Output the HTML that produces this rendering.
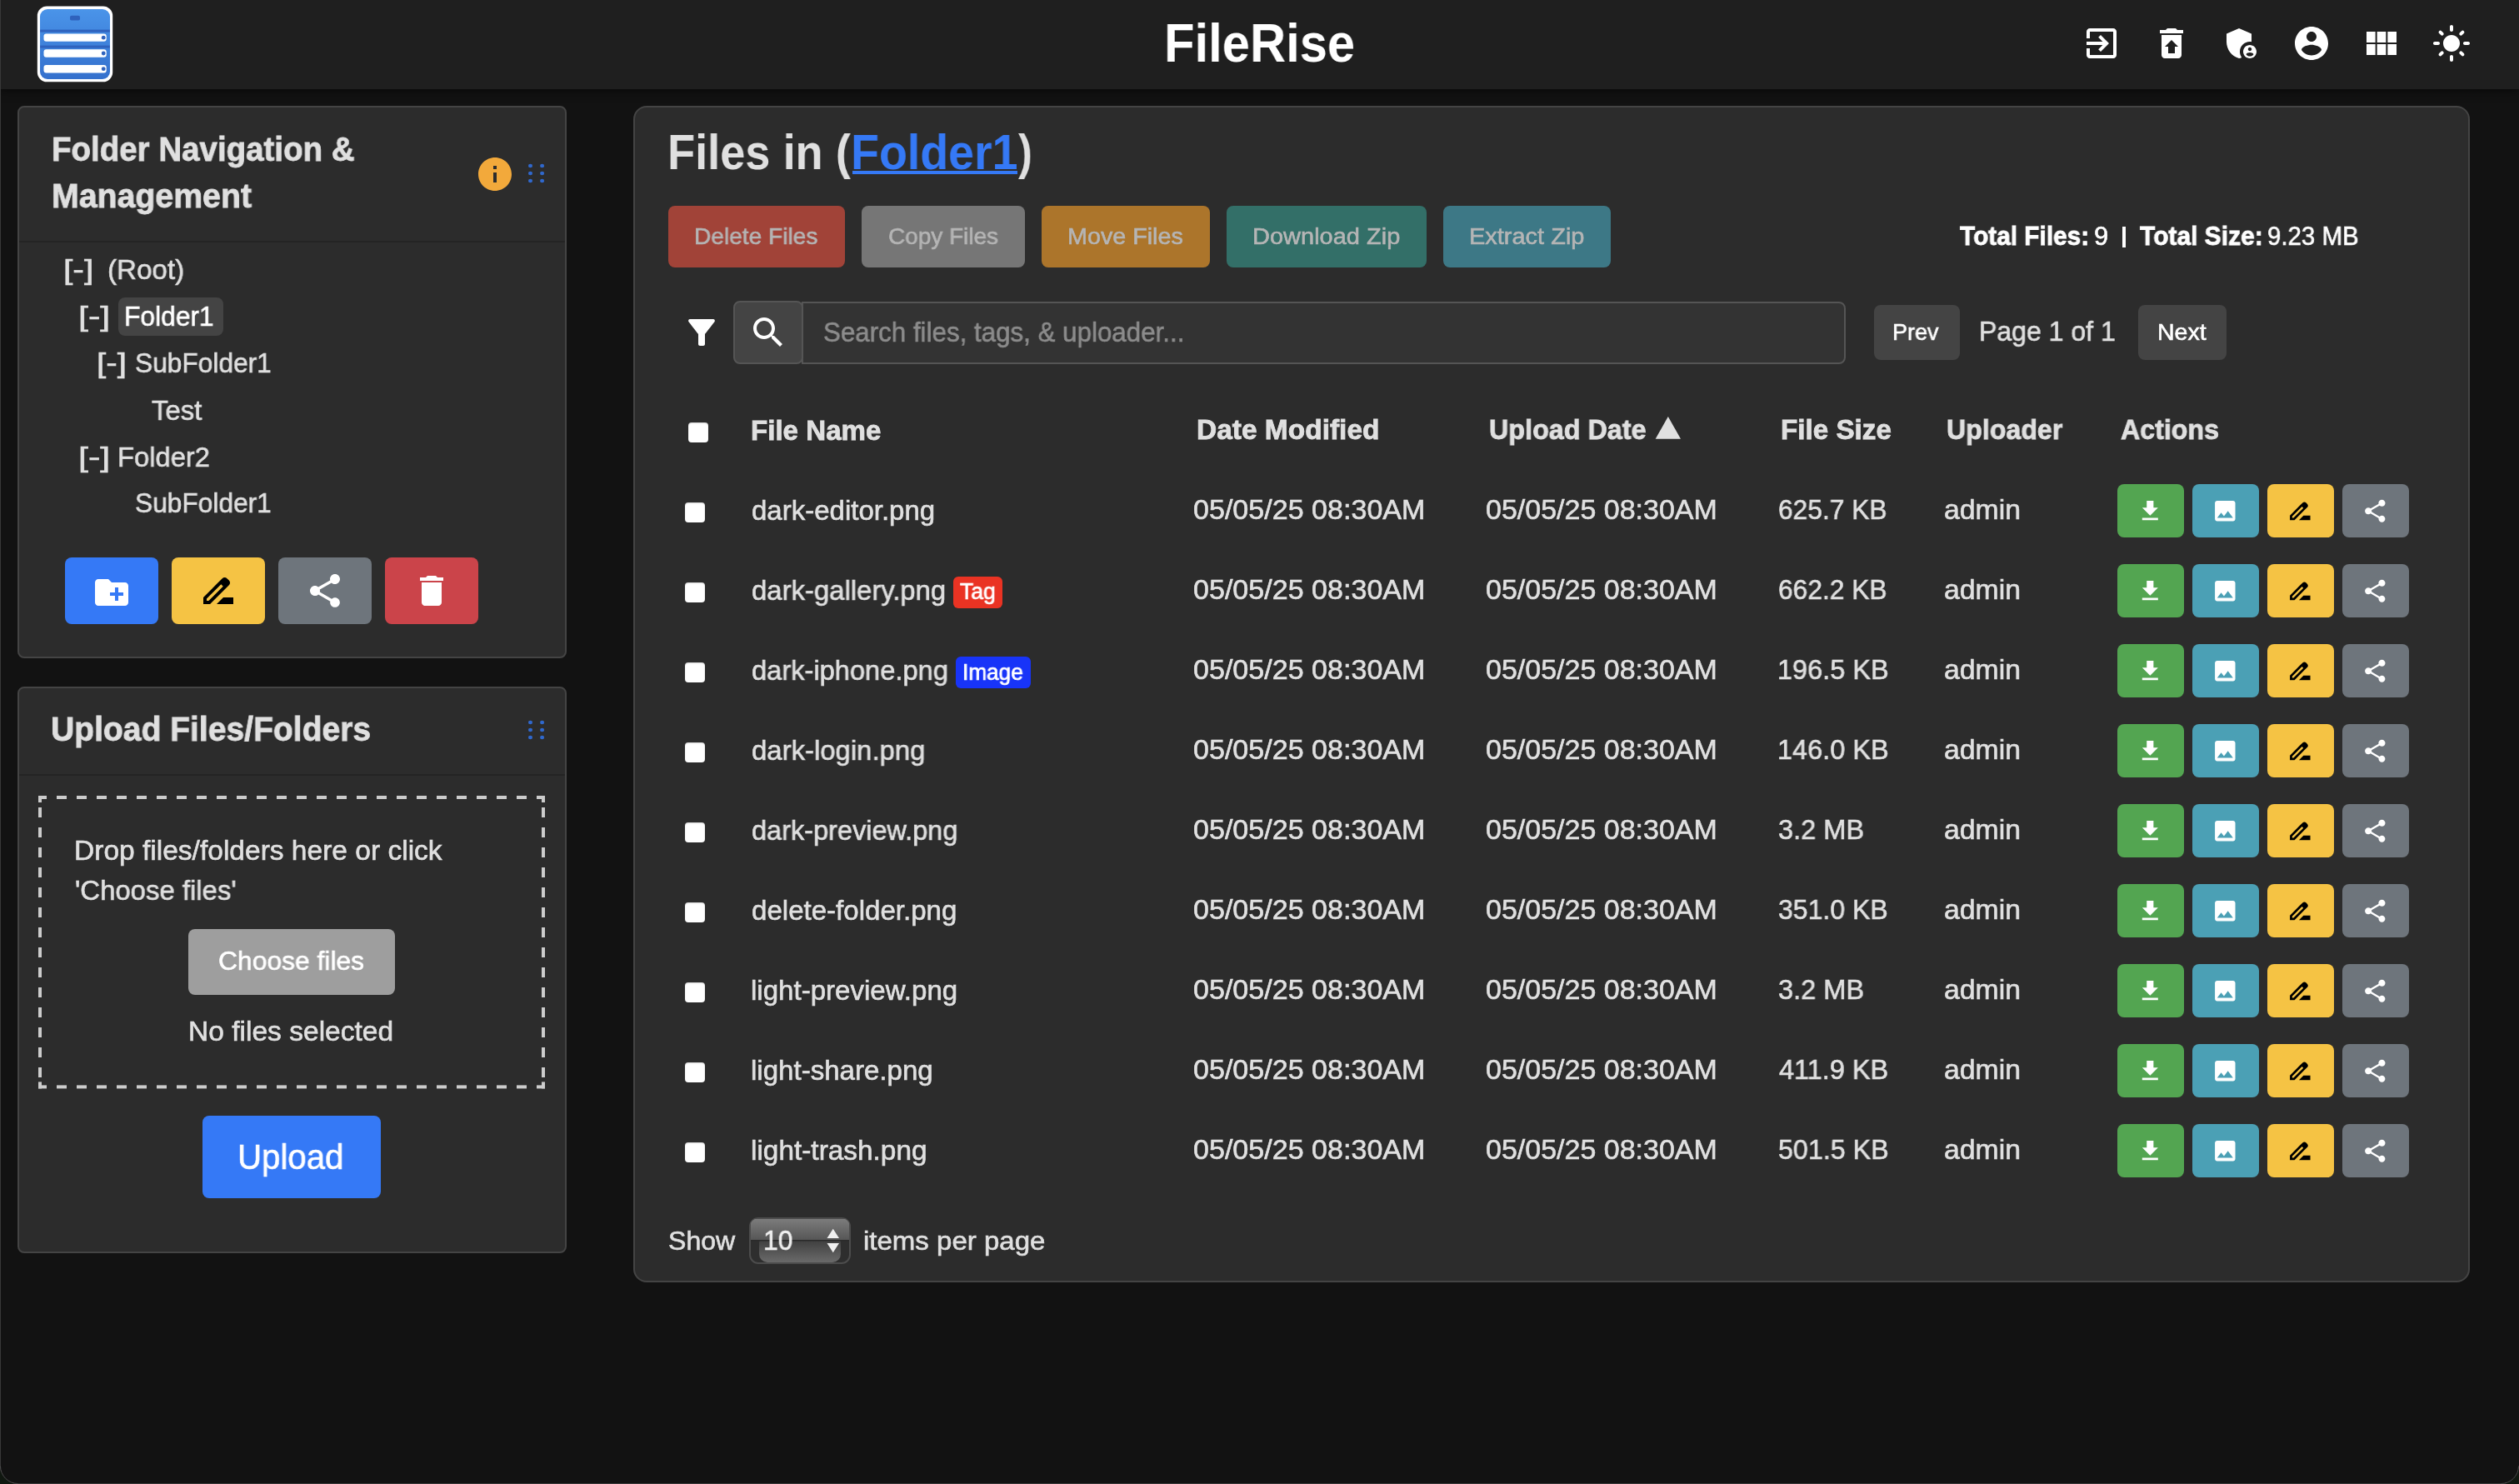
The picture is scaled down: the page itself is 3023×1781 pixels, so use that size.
<!DOCTYPE html>
<html><head><meta charset="utf-8"><title>FileRise</title>
<style>
html,body{margin:0;padding:0;}
body{width:3023px;height:1781px;background:#121212;position:relative;overflow:hidden;font-family:"Liberation Sans",sans-serif;}
.b{position:absolute;}
.t{position:absolute;white-space:pre;transform-origin:0 0;will-change:transform;}
</style></head><body>
<div class="b" style="left:0px;top:0px;width:3023px;height:107px;background:#1f1f1f;box-shadow:0 2px 10px rgba(0,0,0,0.55);z-index:1;"></div>
<svg class="b" style="left:44px;top:7px;z-index:2" width="92" height="92" viewBox="0 0 92 92">
<defs><linearGradient id="lg" x1="0" y1="0" x2="0" y2="1"><stop offset="0" stop-color="#4a94e9"/><stop offset="1" stop-color="#3470cd"/></linearGradient></defs>
<rect x="0.8" y="0.5" width="90.4" height="90.8" rx="11.5" fill="#fff"/>
<rect x="4" y="4" width="84" height="84" rx="9" fill="url(#lg)"/>
<rect x="40" y="11.8" width="12" height="5.7" rx="1.8" fill="#2f62bd"/>
<rect x="4" y="28.6" width="84" height="3" fill="#2f62bd"/>
<rect x="4" y="47.6" width="84" height="3" fill="#2f62bd"/>
<rect x="8.5" y="33.4" width="75.2" height="9.4" rx="3" fill="#fff"/>
<rect x="8.5" y="52.3" width="75.2" height="9.4" rx="3" fill="#fff"/>
<rect x="8.5" y="71" width="75.2" height="9.4" rx="3" fill="#fff"/>
<circle cx="80.2" cy="38.2" r="2.4" fill="#2f62bd"/>
<circle cx="80.2" cy="57" r="2.4" fill="#2f62bd"/>
<circle cx="80.2" cy="75.7" r="2.4" fill="#2f62bd"/>
</svg>
<div class="t" id="hdr_title" style="left:1396.85px;top:19.40px;font-size:65px;line-height:65px;color:#ffffff;font-weight:bold;transform:scaleX(0.9194);z-index:2;">FileRise</div>
<svg class="b" style="left:2498px;top:27.5px;z-index:2;" width="48" height="48" viewBox="0 0 24 24"><path fill="#ffffff" d="M10.09 15.59L11.5 17l5-5-5-5-1.41 1.41L12.67 11H3v2h9.67l-2.58 2.59zM19 3H5c-1.11 0-2 .9-2 2v4h2V5h14v14H5v-4H3v4c0 1.1.89 2 2 2h14c1.1 0 2-.9 2-2V5c0-1.1-.9-2-2-2z"/></svg>
<svg class="b" style="left:2582px;top:27.5px;z-index:2;" width="48" height="48" viewBox="0 0 24 24"><path fill="#ffffff" d="M19 4h-3.5l-1-1h-5l-1 1H5v2h14zM6 7v12c0 1.1.9 2 2 2h8c1.1 0 2-.9 2-2V7H6zm8 7v4h-4v-4H8l4-4 4 4h-2z"/></svg>
<svg class="b" style="left:2666px;top:27.5px;z-index:2;" width="48" height="48" viewBox="0 0 24 24"><path fill="#ffffff" d="M17 11c.34 0 .67.04 1 .09V6.27L10.5 3 3 6.27v4.91c0 4.54 3.2 8.79 7.5 9.82.55-.13 1.08-.32 1.6-.55-.69-.98-1.1-2.17-1.1-3.45 0-3.31 2.69-6 6-6zM17 13c-2.21 0-4 1.79-4 4s1.79 4 4 4 4-1.79 4-4-1.79-4-4-4zm0 1.38c.62 0 1.12.51 1.12 1.12s-.51 1.12-1.12 1.12-1.12-.51-1.12-1.12.5-1.12 1.12-1.12zm0 5.37c-.93 0-1.74-.46-2.24-1.17.05-.72 1.51-1.08 2.24-1.08s2.19.36 2.24 1.08c-.5.71-1.31 1.17-2.24 1.17z"/></svg>
<svg class="b" style="left:2750px;top:27.5px;z-index:2;" width="48" height="48" viewBox="0 0 24 24"><path fill="#ffffff" d="M12 2C6.48 2 2 6.48 2 12s4.48 10 10 10 10-4.48 10-10S17.52 2 12 2zm0 3c1.66 0 3 1.34 3 3s-1.34 3-3 3-3-1.34-3-3 1.34-3 3-3zm0 14.2c-2.5 0-4.71-1.28-6-3.22.03-1.99 4-3.08 6-3.08 1.99 0 5.97 1.09 6 3.08-1.29 1.94-3.5 3.22-6 3.22z"/></svg>
<svg class="b" style="left:2834px;top:27.5px;z-index:2;" width="48" height="48" viewBox="0 0 24 24"><path fill="#ffffff" d="M14.67 5v6.5H9.33V5h5.34zm1 6.5H21V5h-5.33v6.5zm-1 7.5v-6.5H9.33V19h5.34zm1-6.5V19H21v-6.5h-5.33zm-7.34 0H3V19h5.33v-6.5zm0-1V5H3v6.5h5.33z"/></svg>
<svg class="b" style="left:2918px;top:27.5px;z-index:2;" width="48" height="48" viewBox="0 0 24 24"><path fill="#ffffff" d="M12 7c-2.76 0-5 2.24-5 5s2.24 5 5 5 5-2.24 5-5-2.24-5-5-5zM2 13h2c.55 0 1-.45 1-1s-.45-1-1-1H2c-.55 0-1 .45-1 1s.45 1 1 1zm18 0h2c.55 0 1-.45 1-1s-.45-1-1-1h-2c-.55 0-1 .45-1 1s.45 1 1 1zM11 2v2c0 .55.45 1 1 1s1-.45 1-1V2c0-.55-.45-1-1-1s-1 .45-1 1zm0 18v2c0 .55.45 1 1 1s1-.45 1-1v-2c0-.55-.45-1-1-1s-1 .45-1 1zM5.99 4.58c-.39-.39-1.03-.39-1.41 0-.39.39-.39 1.03 0 1.41l1.06 1.06c.39.39 1.03.39 1.41 0s.39-1.03 0-1.41L5.99 4.58zm12.37 12.37c-.39-.39-1.03-.39-1.41 0-.39.39-.39 1.03 0 1.41l1.06 1.06c.39.39 1.03.39 1.41 0 .39-.39.39-1.03 0-1.41l-1.06-1.06zm1.06-10.96c.39-.39.39-1.03 0-1.41-.39-.39-1.03-.39-1.41 0l-1.06 1.06c-.39.39-.39 1.03 0 1.41s1.03.39 1.41 0l1.06-1.06zM7.05 18.36c.39-.39.39-1.03 0-1.41-.39-.39-1.03-.39-1.41 0l-1.06 1.06c-.39.39-.39 1.03 0 1.41s1.03.39 1.41 0l1.06-1.06z"/></svg>
<div class="b" style="left:21px;top:127px;width:659px;height:663px;background:#2c2c2c;border:2px solid #444;box-sizing:border-box;border-radius:8px;"></div>
<div class="b" style="left:23px;top:289px;width:655px;height:2px;background:#242424;"></div>
<div class="t" id="fn_t1" style="left:61.65px;top:159.16px;font-size:41px;line-height:41px;color:#e0e0e0;font-weight:bold;transform:scaleX(0.9388);-webkit-text-stroke:0.8px #e0e0e0;">Folder Navigation &amp;</div>
<div class="t" id="fn_t2" style="left:61.59px;top:214.56px;font-size:41px;line-height:41px;color:#e0e0e0;font-weight:bold;transform:scaleX(0.9577);-webkit-text-stroke:0.8px #e0e0e0;">Management</div>
<svg class="b" style="left:569.6px;top:185px;" width="48" height="48" viewBox="0 0 24 24"><path fill="#f2a93b" d="M12 2C6.48 2 2 6.48 2 12s4.48 10 10 10 10-4.48 10-10S17.52 2 12 2zm1 15h-2v-6h2v6zm0-8h-2V7h2v2z"/></svg>
<svg class="b" style="left:628px;top:191.1px" width="30" height="30" viewBox="0 0 30 30"><ellipse cx="8.5" cy="8" rx="2.55" ry="2.25" fill="#3068cc"/><ellipse cx="8.5" cy="16.9" rx="2.55" ry="2.25" fill="#3068cc"/><ellipse cx="8.5" cy="25.9" rx="2.55" ry="2.25" fill="#3068cc"/><ellipse cx="22.6" cy="8" rx="2.55" ry="2.25" fill="#3068cc"/><ellipse cx="22.6" cy="16.9" rx="2.55" ry="2.25" fill="#3068cc"/><ellipse cx="22.6" cy="25.9" rx="2.55" ry="2.25" fill="#3068cc"/></svg>
<div class="t" id="tr_b1" style="left:76.10px;top:306.44px;font-size:34px;line-height:34px;color:#e0e0e0;font-weight:normal;transform:scaleX(1.2026);-webkit-text-stroke:0.6px #e0e0e0;">[-]</div>
<div class="t" id="tr_root" style="left:128.53px;top:306.44px;font-size:34px;line-height:34px;color:#e0e0e0;font-weight:normal;transform:scaleX(0.9746);-webkit-text-stroke:0.6px #e0e0e0;">(Root)</div>
<div class="t" id="tr_b2" style="left:94.45px;top:362.44px;font-size:34px;line-height:34px;color:#e0e0e0;font-weight:normal;transform:scaleX(1.2616);-webkit-text-stroke:0.6px #e0e0e0;">[-]</div>
<div class="b" style="left:142px;top:357.2px;width:125.5px;height:45.5px;background:#444;border-radius:8px;"></div>
<div class="t" id="tr_f1" style="left:149.13px;top:362.44px;font-size:34px;line-height:34px;color:#ffffff;font-weight:normal;transform:scaleX(0.9339);-webkit-text-stroke:0.6px #ffffff;">Folder1</div>
<div class="t" id="tr_b3" style="left:115.68px;top:418.44px;font-size:34px;line-height:34px;color:#e0e0e0;font-weight:normal;transform:scaleX(1.1909);-webkit-text-stroke:0.6px #e0e0e0;">[-]</div>
<div class="t" id="tr_sf1" style="left:161.59px;top:418.44px;font-size:34px;line-height:34px;color:#e0e0e0;font-weight:normal;transform:scaleX(0.9319);-webkit-text-stroke:0.6px #e0e0e0;">SubFolder1</div>
<div class="t" id="tr_test" style="left:182.45px;top:474.64px;font-size:34px;line-height:34px;color:#e0e0e0;font-weight:normal;transform:scaleX(0.9656);-webkit-text-stroke:0.6px #e0e0e0;">Test</div>
<div class="t" id="tr_b4" style="left:94.45px;top:531.14px;font-size:34px;line-height:34px;color:#e0e0e0;font-weight:normal;transform:scaleX(1.2616);-webkit-text-stroke:0.6px #e0e0e0;">[-]</div>
<div class="t" id="tr_f2" style="left:140.99px;top:531.14px;font-size:34px;line-height:34px;color:#e0e0e0;font-weight:normal;transform:scaleX(0.9626);-webkit-text-stroke:0.6px #e0e0e0;">Folder2</div>
<div class="t" id="tr_sf2" style="left:161.59px;top:586.44px;font-size:34px;line-height:34px;color:#e0e0e0;font-weight:normal;transform:scaleX(0.9319);-webkit-text-stroke:0.6px #e0e0e0;">SubFolder1</div>
<div class="b" style="left:78px;top:669px;width:112px;height:80px;background:#3579f6;border-radius:8px;"></div>
<svg class="b" style="left:110px;top:686.5px;" width="48" height="48" viewBox="0 0 24 24"><path fill="#fff" d="M20 6h-8l-2-2H4c-1.11 0-1.99.89-1.99 2L2 18c0 1.11.89 2 2 2h16c1.11 0 2-.89 2-2V8c0-1.11-.89-2-2-2z"/></svg>
<svg class="b" style="left:110px;top:686.5px;" width="48" height="48" viewBox="0 0 24 24"><path fill="#3579f6" d="M19 14h-3v3h-2v-3h-3v-2h3V9h2v3h3v2z"/></svg>
<div class="b" style="left:206px;top:669px;width:112px;height:80px;background:#f5c344;border-radius:8px;"></div>
<svg class="b" style="left:238px;top:684.5px;" width="48" height="48" viewBox="0 0 24 24"><path fill="#000" d="M18.41 5.8L17.2 4.59c-.78-.78-2.05-.78-2.83 0l-2.68 2.68L3 15.96V20h4.04l8.74-8.74 2.63-2.63c.79-.78.79-2.05 0-2.83zM6.21 18H5v-1.21l8.66-8.66 1.21 1.21L6.21 18zM11 20l4-4h6v4H11z"/></svg>
<div class="b" style="left:334px;top:669px;width:112px;height:80px;background:#6e757c;border-radius:8px;"></div>
<svg class="b" style="left:366px;top:684.5px;" width="48" height="48" viewBox="0 0 24 24"><path fill="#fff" d="M18 16.08c-.76 0-1.44.3-1.96.77L8.91 12.7c.05-.23.09-.46.09-.7s-.04-.47-.09-.7l7.05-4.11c.54.5 1.25.81 2.04.81 1.66 0 3-1.34 3-3s-1.34-3-3-3-3 1.34-3 3c0 .24.04.47.09.7L8.04 9.81C7.5 9.31 6.79 9 6 9c-1.66 0-3 1.34-3 3s1.34 3 3 3c.79 0 1.5-.31 2.04-.81l7.12 4.16c-.05.21-.08.43-.08.65 0 1.61 1.31 2.92 2.92 2.92 1.61 0 2.92-1.31 2.92-2.92s-1.31-2.92-2.92-2.92z"/></svg>
<div class="b" style="left:462px;top:669px;width:112px;height:80px;background:#cb444a;border-radius:8px;"></div>
<svg class="b" style="left:494px;top:684.5px;" width="48" height="48" viewBox="0 0 24 24"><path fill="#fff" d="M6 19c0 1.1.9 2 2 2h8c1.1 0 2-.9 2-2V7H6v12zM19 4h-3.5l-1-1h-5l-1 1H5v2h14V4z"/></svg>
<div class="b" style="left:21px;top:824px;width:659px;height:680px;background:#2c2c2c;border:2px solid #444;box-sizing:border-box;border-radius:8px;"></div>
<div class="b" style="left:23px;top:928.5px;width:655px;height:2px;background:#242424;"></div>
<div class="t" id="up_t" style="left:61.18px;top:854.96px;font-size:41px;line-height:41px;color:#e0e0e0;font-weight:bold;transform:scaleX(0.9523);-webkit-text-stroke:0.8px #e0e0e0;">Upload Files/Folders</div>
<svg class="b" style="left:628px;top:859.0px" width="30" height="30" viewBox="0 0 30 30"><ellipse cx="8.5" cy="8" rx="2.55" ry="2.25" fill="#3068cc"/><ellipse cx="8.5" cy="16.9" rx="2.55" ry="2.25" fill="#3068cc"/><ellipse cx="8.5" cy="25.9" rx="2.55" ry="2.25" fill="#3068cc"/><ellipse cx="22.6" cy="8" rx="2.55" ry="2.25" fill="#3068cc"/><ellipse cx="22.6" cy="16.9" rx="2.55" ry="2.25" fill="#3068cc"/><ellipse cx="22.6" cy="25.9" rx="2.55" ry="2.25" fill="#3068cc"/></svg>
<svg class="b" style="left:0;top:0" width="700" height="1400"><rect x="46" y="955" width="10" height="4" fill="#cccccc"/><rect x="46" y="955" width="4" height="8" fill="#cccccc"/><rect x="644" y="955" width="10" height="4" fill="#cccccc"/><rect x="650" y="955" width="4" height="8" fill="#cccccc"/><rect x="46" y="1302.4" width="10" height="4" fill="#cccccc"/><rect x="46" y="1298.4" width="4" height="8" fill="#cccccc"/><rect x="644" y="1302.4" width="10" height="4" fill="#cccccc"/><rect x="650" y="1298.4" width="4" height="8" fill="#cccccc"/><rect x="68" y="955" width="12" height="4" fill="#cccccc"/><rect x="68" y="1302.4" width="12" height="4" fill="#cccccc"/><rect x="92" y="955" width="12" height="4" fill="#cccccc"/><rect x="92" y="1302.4" width="12" height="4" fill="#cccccc"/><rect x="116" y="955" width="12" height="4" fill="#cccccc"/><rect x="116" y="1302.4" width="12" height="4" fill="#cccccc"/><rect x="140" y="955" width="12" height="4" fill="#cccccc"/><rect x="140" y="1302.4" width="12" height="4" fill="#cccccc"/><rect x="164" y="955" width="12" height="4" fill="#cccccc"/><rect x="164" y="1302.4" width="12" height="4" fill="#cccccc"/><rect x="188" y="955" width="12" height="4" fill="#cccccc"/><rect x="188" y="1302.4" width="12" height="4" fill="#cccccc"/><rect x="212" y="955" width="12" height="4" fill="#cccccc"/><rect x="212" y="1302.4" width="12" height="4" fill="#cccccc"/><rect x="236" y="955" width="12" height="4" fill="#cccccc"/><rect x="236" y="1302.4" width="12" height="4" fill="#cccccc"/><rect x="260" y="955" width="12" height="4" fill="#cccccc"/><rect x="260" y="1302.4" width="12" height="4" fill="#cccccc"/><rect x="284" y="955" width="12" height="4" fill="#cccccc"/><rect x="284" y="1302.4" width="12" height="4" fill="#cccccc"/><rect x="308" y="955" width="12" height="4" fill="#cccccc"/><rect x="308" y="1302.4" width="12" height="4" fill="#cccccc"/><rect x="332" y="955" width="12" height="4" fill="#cccccc"/><rect x="332" y="1302.4" width="12" height="4" fill="#cccccc"/><rect x="356" y="955" width="12" height="4" fill="#cccccc"/><rect x="356" y="1302.4" width="12" height="4" fill="#cccccc"/><rect x="380" y="955" width="12" height="4" fill="#cccccc"/><rect x="380" y="1302.4" width="12" height="4" fill="#cccccc"/><rect x="404" y="955" width="12" height="4" fill="#cccccc"/><rect x="404" y="1302.4" width="12" height="4" fill="#cccccc"/><rect x="428" y="955" width="12" height="4" fill="#cccccc"/><rect x="428" y="1302.4" width="12" height="4" fill="#cccccc"/><rect x="452" y="955" width="12" height="4" fill="#cccccc"/><rect x="452" y="1302.4" width="12" height="4" fill="#cccccc"/><rect x="476" y="955" width="12" height="4" fill="#cccccc"/><rect x="476" y="1302.4" width="12" height="4" fill="#cccccc"/><rect x="500" y="955" width="12" height="4" fill="#cccccc"/><rect x="500" y="1302.4" width="12" height="4" fill="#cccccc"/><rect x="524" y="955" width="12" height="4" fill="#cccccc"/><rect x="524" y="1302.4" width="12" height="4" fill="#cccccc"/><rect x="548" y="955" width="12" height="4" fill="#cccccc"/><rect x="548" y="1302.4" width="12" height="4" fill="#cccccc"/><rect x="572" y="955" width="12" height="4" fill="#cccccc"/><rect x="572" y="1302.4" width="12" height="4" fill="#cccccc"/><rect x="596" y="955" width="12" height="4" fill="#cccccc"/><rect x="596" y="1302.4" width="12" height="4" fill="#cccccc"/><rect x="620" y="955" width="12" height="4" fill="#cccccc"/><rect x="620" y="1302.4" width="12" height="4" fill="#cccccc"/><rect x="46" y="969" width="4" height="12" fill="#cccccc"/><rect x="650" y="969" width="4" height="12" fill="#cccccc"/><rect x="46" y="993" width="4" height="12" fill="#cccccc"/><rect x="650" y="993" width="4" height="12" fill="#cccccc"/><rect x="46" y="1017" width="4" height="12" fill="#cccccc"/><rect x="650" y="1017" width="4" height="12" fill="#cccccc"/><rect x="46" y="1041" width="4" height="12" fill="#cccccc"/><rect x="650" y="1041" width="4" height="12" fill="#cccccc"/><rect x="46" y="1065" width="4" height="12" fill="#cccccc"/><rect x="650" y="1065" width="4" height="12" fill="#cccccc"/><rect x="46" y="1089" width="4" height="12" fill="#cccccc"/><rect x="650" y="1089" width="4" height="12" fill="#cccccc"/><rect x="46" y="1113" width="4" height="12" fill="#cccccc"/><rect x="650" y="1113" width="4" height="12" fill="#cccccc"/><rect x="46" y="1137" width="4" height="12" fill="#cccccc"/><rect x="650" y="1137" width="4" height="12" fill="#cccccc"/><rect x="46" y="1161" width="4" height="12" fill="#cccccc"/><rect x="650" y="1161" width="4" height="12" fill="#cccccc"/><rect x="46" y="1185" width="4" height="12" fill="#cccccc"/><rect x="650" y="1185" width="4" height="12" fill="#cccccc"/><rect x="46" y="1209" width="4" height="12" fill="#cccccc"/><rect x="650" y="1209" width="4" height="12" fill="#cccccc"/><rect x="46" y="1233" width="4" height="12" fill="#cccccc"/><rect x="650" y="1233" width="4" height="12" fill="#cccccc"/><rect x="46" y="1257" width="4" height="12" fill="#cccccc"/><rect x="650" y="1257" width="4" height="12" fill="#cccccc"/><rect x="46" y="1281" width="4" height="12" fill="#cccccc"/><rect x="650" y="1281" width="4" height="12" fill="#cccccc"/></svg>
<div class="t" id="up_d1" style="left:88.57px;top:1004.28px;font-size:33px;line-height:33px;color:#e0e0e0;font-weight:normal;transform:scaleX(1.0160);-webkit-text-stroke:0.6px #e0e0e0;">Drop files/folders here or click</div>
<div class="t" id="up_d2" style="left:89.61px;top:1052.28px;font-size:33px;line-height:33px;color:#e0e0e0;font-weight:normal;transform:scaleX(0.9969);-webkit-text-stroke:0.6px #e0e0e0;">&#x27;Choose files&#x27;</div>
<div class="b" style="left:226px;top:1115px;width:248px;height:79px;background:#9e9e9e;border-radius:8px;"></div>
<div class="t" id="up_choose" style="left:262.01px;top:1137.12px;font-size:32px;line-height:32px;color:#ffffff;font-weight:normal;transform:scaleX(0.9943);-webkit-text-stroke:0.6px #ffffff;">Choose files</div>
<div class="t" id="up_none" style="left:225.97px;top:1220.88px;font-size:33px;line-height:33px;color:#e0e0e0;font-weight:normal;transform:scaleX(1.0168);-webkit-text-stroke:0.6px #e0e0e0;">No files selected</div>
<div class="b" style="left:243px;top:1339px;width:214px;height:99px;background:#3579f6;border-radius:8px;"></div>
<div class="t" id="up_btn" style="left:285.14px;top:1367.72px;font-size:42px;line-height:42px;color:#ffffff;font-weight:normal;transform:scaleX(0.9571);-webkit-text-stroke:0.6px #ffffff;">Upload</div>
<div class="b" style="left:760px;top:127px;width:2204px;height:1412px;background:#2c2c2c;border:2px solid #444;box-sizing:border-box;border-radius:16px;"></div>
<div class="t" id="m_title1" style="left:801.48px;top:152.60px;font-size:60px;line-height:60px;color:#e0e0e0;font-weight:bold;transform:scaleX(0.9030);">Files in (</div>
<div class="t" id="m_title2" style="left:1021.15px;top:152.60px;font-size:60px;line-height:60px;color:#3579f6;font-weight:bold;transform:scaleX(0.9254);">Folder1</div>
<div class="b" style="left:1022.6px;top:205.3px;width:198.2px;height:3.9px;background:#3579f6;"></div>
<div class="t" id="m_title3" style="left:1221.53px;top:152.60px;font-size:60px;line-height:60px;color:#e0e0e0;font-weight:bold;transform:scaleX(0.8447);">)</div>
<div class="b" style="left:802px;top:247px;width:212px;height:74px;background:#a14338;border-radius:8px;"></div>
<div class="t" id="m_btn0" style="left:833.03px;top:269.06px;font-size:28.5px;line-height:28.5px;color:#b5b5b5;font-weight:normal;transform:scaleX(0.9865);-webkit-text-stroke:0.6px #b5b5b5;">Delete Files</div>
<div class="b" style="left:1034px;top:247px;width:196px;height:74px;background:#767676;border-radius:8px;"></div>
<div class="t" id="m_btn1" style="left:1065.62px;top:269.06px;font-size:28.5px;line-height:28.5px;color:#b5b5b5;font-weight:normal;transform:scaleX(0.9813);-webkit-text-stroke:0.6px #b5b5b5;">Copy Files</div>
<div class="b" style="left:1250px;top:247px;width:202px;height:74px;background:#ac752b;border-radius:8px;"></div>
<div class="t" id="m_btn2" style="left:1280.98px;top:269.06px;font-size:28.5px;line-height:28.5px;color:#b5b5b5;font-weight:normal;transform:scaleX(1.0075);-webkit-text-stroke:0.6px #b5b5b5;">Move Files</div>
<div class="b" style="left:1472px;top:247px;width:240px;height:74px;background:#336f68;border-radius:8px;"></div>
<div class="t" id="m_btn3" style="left:1502.98px;top:269.06px;font-size:28.5px;line-height:28.5px;color:#b5b5b5;font-weight:normal;transform:scaleX(1.0177);-webkit-text-stroke:0.6px #b5b5b5;">Download Zip</div>
<div class="b" style="left:1732px;top:247px;width:201px;height:74px;background:#3d7886;border-radius:8px;"></div>
<div class="t" id="m_btn4" style="left:1762.80px;top:269.06px;font-size:28.5px;line-height:28.5px;color:#b5b5b5;font-weight:normal;transform:scaleX(1.0166);-webkit-text-stroke:0.6px #b5b5b5;">Extract Zip</div>
<div class="t" id="m_tot1" style="left:2352.17px;top:267.66px;font-size:31px;line-height:31px;color:#ffffff;font-weight:bold;transform:scaleX(0.9615);-webkit-text-stroke:0.8px #ffffff;">Total Files:</div>
<div class="t" id="m_tot2" style="left:2513.46px;top:267.66px;font-size:31px;line-height:31px;color:#ffffff;font-weight:normal;transform:scaleX(1.0005);-webkit-text-stroke:0.6px #ffffff;">9</div>
<div class="b" style="left:2547.2px;top:272px;width:3.6px;height:25px;background:#ffffff;"></div>
<div class="t" id="m_tot4" style="left:2568.00px;top:267.66px;font-size:31px;line-height:31px;color:#ffffff;font-weight:bold;transform:scaleX(0.9665);-webkit-text-stroke:0.8px #ffffff;">Total Size:</div>
<div class="t" id="m_tot5" style="left:2721.48px;top:267.66px;font-size:31px;line-height:31px;color:#ffffff;font-weight:normal;transform:scaleX(0.9498);-webkit-text-stroke:0.6px #ffffff;">9.23 MB</div>
<svg class="b" style="left:818px;top:374.6px;" width="48" height="48" viewBox="0 0 24 24"><path fill="#ffffff" d="M4.25 5.61C6.27 8.2 10 13 10 13v6c0 .55.45 1 1 1h2c.55 0 1-.45 1-1v-6s3.72-4.8 5.74-7.39c.51-.66.04-1.61-.79-1.61H5.04c-.83 0-1.3.95-.79 1.61z"/></svg>
<div class="b" style="left:962px;top:361.5px;width:1253px;height:75px;background:#333;border:2px solid #555;box-sizing:border-box;border-radius:0 8px 8px 0;"></div>
<div class="b" style="left:880px;top:361px;width:84px;height:76px;background:#444;border:2px solid #555;box-sizing:border-box;border-radius:8px;"></div>
<svg class="b" style="left:898px;top:375px;" width="48" height="48" viewBox="0 0 24 24"><path fill="#ffffff" d="M15.5 14h-.79l-.28-.27C15.41 12.59 16 11.11 16 9.5 16 5.91 13.09 3 9.5 3S3 5.91 3 9.5 5.91 16 9.5 16c1.61 0 3.09-.59 4.23-1.57l.27.28v.79l5 4.99L20.49 19l-4.99-5zm-6 0C7.01 14 5 11.99 5 9.5S7.01 5 9.5 5 14 7.01 14 9.5 11.99 14 9.5 14z"/></svg>
<div class="t" id="m_ph" style="left:988.08px;top:381.44px;font-size:34px;line-height:34px;color:#8c8c8c;font-weight:normal;transform:scaleX(0.9208);-webkit-text-stroke:0.6px #8c8c8c;">Search files, tags, &amp; uploader...</div>
<div class="b" style="left:2249px;top:366px;width:103px;height:66px;background:#444;border-radius:8px;"></div>
<div class="t" id="m_prev" style="left:2271.11px;top:384.06px;font-size:28.5px;line-height:28.5px;color:#ffffff;font-weight:normal;transform:scaleX(0.9477);-webkit-text-stroke:0.6px #ffffff;">Prev</div>
<div class="t" id="m_page" style="left:2375.04px;top:381.28px;font-size:33px;line-height:33px;color:#e0e0e0;font-weight:normal;transform:scaleX(0.9700);-webkit-text-stroke:0.6px #e0e0e0;">Page 1 of 1</div>
<div class="b" style="left:2566px;top:366px;width:106px;height:66px;background:#444;border-radius:8px;"></div>
<div class="t" id="m_next" style="left:2588.86px;top:384.06px;font-size:28.5px;line-height:28.5px;color:#ffffff;font-weight:normal;transform:scaleX(0.9997);-webkit-text-stroke:0.6px #ffffff;">Next</div>
<div class="b" style="left:826px;top:507px;width:24px;height:24px;background:#ffffff;border-radius:4px;box-shadow:inset 0 1px 1.5px rgba(0,0,0,0.18);"></div>
<div class="t" id="th_name" style="left:900.50px;top:500.28px;font-size:33px;line-height:33px;color:#e0e0e0;font-weight:bold;transform:scaleX(1.0033);-webkit-text-stroke:0.8px #e0e0e0;">File Name</div>
<div class="t" id="th_dm" style="left:1435.50px;top:499.28px;font-size:33px;line-height:33px;color:#e0e0e0;font-weight:bold;transform:scaleX(1.0146);-webkit-text-stroke:0.8px #e0e0e0;">Date Modified</div>
<div class="t" id="th_ud" style="left:1787.03px;top:499.28px;font-size:33px;line-height:33px;color:#e0e0e0;font-weight:bold;transform:scaleX(0.9792);-webkit-text-stroke:0.8px #e0e0e0;">Upload Date</div>
<svg class="b" style="left:1986px;top:499px" width="32" height="29" viewBox="0 0 32 29"><polygon points="0.7,27.7 31,27.7 15.85,1" fill="#e0e0e0"/></svg>
<div class="t" id="th_fs" style="left:2136.95px;top:499.28px;font-size:33px;line-height:33px;color:#e0e0e0;font-weight:bold;transform:scaleX(1.0063);-webkit-text-stroke:0.8px #e0e0e0;">File Size</div>
<div class="t" id="th_up" style="left:2336.22px;top:499.28px;font-size:33px;line-height:33px;color:#e0e0e0;font-weight:bold;transform:scaleX(0.9740);-webkit-text-stroke:0.8px #e0e0e0;">Uploader</div>
<div class="t" id="th_act" style="left:2544.90px;top:499.28px;font-size:33px;line-height:33px;color:#e0e0e0;font-weight:bold;transform:scaleX(0.9744);-webkit-text-stroke:0.8px #e0e0e0;">Actions</div>
<div class="b" style="left:822px;top:603px;width:24px;height:24px;background:#ffffff;border-radius:4px;box-shadow:inset 0 1px 1.5px rgba(0,0,0,0.18);"></div>
<div class="t" id="r0_name" style="left:901.50px;top:596.28px;font-size:33px;line-height:33px;color:#e0e0e0;font-weight:normal;-webkit-text-stroke:0.6px #e0e0e0;">dark-editor.png</div>
<div class="t" id="r0_dm" style="left:1431.97px;top:594.78px;font-size:33px;line-height:33px;color:#e0e0e0;font-weight:normal;transform:scaleX(1.0324);-webkit-text-stroke:0.6px #e0e0e0;">05/05/25 08:30AM</div>
<div class="t" id="r0_ud" style="left:1782.97px;top:594.78px;font-size:33px;line-height:33px;color:#e0e0e0;font-weight:normal;transform:scaleX(1.0301);-webkit-text-stroke:0.6px #e0e0e0;">05/05/25 08:30AM</div>
<div class="t" id="r0_sz" style="left:2134.27px;top:594.78px;font-size:33px;line-height:33px;color:#e0e0e0;font-weight:normal;transform:scaleX(0.9611);-webkit-text-stroke:0.6px #e0e0e0;">625.7 KB</div>
<div class="t" id="r0_ad" style="left:2332.98px;top:594.78px;font-size:33px;line-height:33px;color:#e0e0e0;font-weight:normal;transform:scaleX(1.0230);-webkit-text-stroke:0.6px #e0e0e0;">admin</div>
<div class="b" style="left:2541px;top:581px;width:80px;height:64px;background:#53a551;border-radius:8px;"></div>
<svg class="b" style="left:2564px;top:596.7px;" width="32.6" height="32.6" viewBox="0 0 24 24"><path fill="#fff" d="M19 9h-4V3H9v6H5l7 7 7-7zM5 18v2h14v-2H5z"/></svg>
<div class="b" style="left:2631px;top:581px;width:80px;height:64px;background:#4ba0b5;border-radius:8px;"></div>
<svg class="b" style="left:2654px;top:596.7px;" width="32.6" height="32.6" viewBox="0 0 24 24"><path fill="#fff" d="M21 19V5c0-1.1-.9-2-2-2H5c-1.1 0-2 .9-2 2v14c0 1.1.9 2 2 2h14c1.1 0 2-.9 2-2zM8.5 13.5l2.5 3.01L14.5 12l4.5 6H5l3.5-4.5z"/></svg>
<div class="b" style="left:2721px;top:581px;width:80px;height:64px;background:#f5c344;border-radius:8px;"></div>
<svg class="b" style="left:2744px;top:596.7px;" width="32.6" height="32.6" viewBox="0 0 24 24"><path fill="#000" d="M18.41 5.8L17.2 4.59c-.78-.78-2.05-.78-2.83 0l-2.68 2.68L3 15.96V20h4.04l8.74-8.74 2.63-2.63c.79-.78.79-2.05 0-2.83zM6.21 18H5v-1.21l8.66-8.66 1.21 1.21L6.21 18zM11 20l4-4h6v4H11z"/></svg>
<div class="b" style="left:2811px;top:581px;width:80px;height:64px;background:#6e757c;border-radius:8px;"></div>
<svg class="b" style="left:2834px;top:596.7px;" width="32.6" height="32.6" viewBox="0 0 24 24"><path fill="#fff" d="M18 16.08c-.76 0-1.44.3-1.96.77L8.91 12.7c.05-.23.09-.46.09-.7s-.04-.47-.09-.7l7.05-4.11c.54.5 1.25.81 2.04.81 1.66 0 3-1.34 3-3s-1.34-3-3-3-3 1.34-3 3c0 .24.04.47.09.7L8.04 9.81C7.5 9.31 6.79 9 6 9c-1.66 0-3 1.34-3 3s1.34 3 3 3c.79 0 1.5-.31 2.04-.81l7.12 4.16c-.05.21-.08.43-.08.65 0 1.61 1.31 2.92 2.92 2.92 1.61 0 2.92-1.31 2.92-2.92s-1.31-2.92-2.92-2.92z"/></svg>
<div class="b" style="left:822px;top:699px;width:24px;height:24px;background:#ffffff;border-radius:4px;box-shadow:inset 0 1px 1.5px rgba(0,0,0,0.18);"></div>
<div class="t" id="r1_name" style="left:901.50px;top:692.28px;font-size:33px;line-height:33px;color:#e0e0e0;font-weight:normal;transform:scaleX(0.9957);-webkit-text-stroke:0.6px #e0e0e0;">dark-gallery.png</div>
<div class="b" style="left:1144px;top:692px;width:58.5px;height:37.5px;background:#ea3323;border-radius:6px;"></div>
<div class="t" id="r1_tag" style="left:1152.00px;top:697.32px;font-size:27px;line-height:27px;color:#ffffff;font-weight:normal;transform:scaleX(0.9826);-webkit-text-stroke:0.7px #fff;">Tag</div>
<div class="t" id="r1_dm" style="left:1431.97px;top:690.78px;font-size:33px;line-height:33px;color:#e0e0e0;font-weight:normal;transform:scaleX(1.0324);-webkit-text-stroke:0.6px #e0e0e0;">05/05/25 08:30AM</div>
<div class="t" id="r1_ud" style="left:1782.97px;top:690.78px;font-size:33px;line-height:33px;color:#e0e0e0;font-weight:normal;transform:scaleX(1.0301);-webkit-text-stroke:0.6px #e0e0e0;">05/05/25 08:30AM</div>
<div class="t" id="r1_sz" style="left:2134.27px;top:690.78px;font-size:33px;line-height:33px;color:#e0e0e0;font-weight:normal;transform:scaleX(0.9611);-webkit-text-stroke:0.6px #e0e0e0;">662.2 KB</div>
<div class="t" id="r1_ad" style="left:2332.98px;top:690.78px;font-size:33px;line-height:33px;color:#e0e0e0;font-weight:normal;transform:scaleX(1.0230);-webkit-text-stroke:0.6px #e0e0e0;">admin</div>
<div class="b" style="left:2541px;top:677px;width:80px;height:64px;background:#53a551;border-radius:8px;"></div>
<svg class="b" style="left:2564px;top:692.7px;" width="32.6" height="32.6" viewBox="0 0 24 24"><path fill="#fff" d="M19 9h-4V3H9v6H5l7 7 7-7zM5 18v2h14v-2H5z"/></svg>
<div class="b" style="left:2631px;top:677px;width:80px;height:64px;background:#4ba0b5;border-radius:8px;"></div>
<svg class="b" style="left:2654px;top:692.7px;" width="32.6" height="32.6" viewBox="0 0 24 24"><path fill="#fff" d="M21 19V5c0-1.1-.9-2-2-2H5c-1.1 0-2 .9-2 2v14c0 1.1.9 2 2 2h14c1.1 0 2-.9 2-2zM8.5 13.5l2.5 3.01L14.5 12l4.5 6H5l3.5-4.5z"/></svg>
<div class="b" style="left:2721px;top:677px;width:80px;height:64px;background:#f5c344;border-radius:8px;"></div>
<svg class="b" style="left:2744px;top:692.7px;" width="32.6" height="32.6" viewBox="0 0 24 24"><path fill="#000" d="M18.41 5.8L17.2 4.59c-.78-.78-2.05-.78-2.83 0l-2.68 2.68L3 15.96V20h4.04l8.74-8.74 2.63-2.63c.79-.78.79-2.05 0-2.83zM6.21 18H5v-1.21l8.66-8.66 1.21 1.21L6.21 18zM11 20l4-4h6v4H11z"/></svg>
<div class="b" style="left:2811px;top:677px;width:80px;height:64px;background:#6e757c;border-radius:8px;"></div>
<svg class="b" style="left:2834px;top:692.7px;" width="32.6" height="32.6" viewBox="0 0 24 24"><path fill="#fff" d="M18 16.08c-.76 0-1.44.3-1.96.77L8.91 12.7c.05-.23.09-.46.09-.7s-.04-.47-.09-.7l7.05-4.11c.54.5 1.25.81 2.04.81 1.66 0 3-1.34 3-3s-1.34-3-3-3-3 1.34-3 3c0 .24.04.47.09.7L8.04 9.81C7.5 9.31 6.79 9 6 9c-1.66 0-3 1.34-3 3s1.34 3 3 3c.79 0 1.5-.31 2.04-.81l7.12 4.16c-.05.21-.08.43-.08.65 0 1.61 1.31 2.92 2.92 2.92 1.61 0 2.92-1.31 2.92-2.92s-1.31-2.92-2.92-2.92z"/></svg>
<div class="b" style="left:822px;top:795px;width:24px;height:24px;background:#ffffff;border-radius:4px;box-shadow:inset 0 1px 1.5px rgba(0,0,0,0.18);"></div>
<div class="t" id="r2_name" style="left:901.51px;top:788.28px;font-size:33px;line-height:33px;color:#e0e0e0;font-weight:normal;transform:scaleX(0.9890);-webkit-text-stroke:0.6px #e0e0e0;">dark-iphone.png</div>
<div class="b" style="left:1146.8px;top:788px;width:90.2px;height:38px;background:#1834f8;border-radius:6px;"></div>
<div class="t" id="r2_img" style="left:1154.70px;top:793.10px;font-size:27.5px;line-height:27.5px;color:#ffffff;font-weight:normal;transform:scaleX(0.9515);-webkit-text-stroke:0.7px #fff;">Image</div>
<div class="t" id="r2_dm" style="left:1431.97px;top:786.78px;font-size:33px;line-height:33px;color:#e0e0e0;font-weight:normal;transform:scaleX(1.0324);-webkit-text-stroke:0.6px #e0e0e0;">05/05/25 08:30AM</div>
<div class="t" id="r2_ud" style="left:1782.97px;top:786.78px;font-size:33px;line-height:33px;color:#e0e0e0;font-weight:normal;transform:scaleX(1.0301);-webkit-text-stroke:0.6px #e0e0e0;">05/05/25 08:30AM</div>
<div class="t" id="r2_sz" style="left:2133.20px;top:786.78px;font-size:33px;line-height:33px;color:#e0e0e0;font-weight:normal;transform:scaleX(0.9842);-webkit-text-stroke:0.6px #e0e0e0;">196.5 KB</div>
<div class="t" id="r2_ad" style="left:2332.98px;top:786.78px;font-size:33px;line-height:33px;color:#e0e0e0;font-weight:normal;transform:scaleX(1.0230);-webkit-text-stroke:0.6px #e0e0e0;">admin</div>
<div class="b" style="left:2541px;top:773px;width:80px;height:64px;background:#53a551;border-radius:8px;"></div>
<svg class="b" style="left:2564px;top:788.7px;" width="32.6" height="32.6" viewBox="0 0 24 24"><path fill="#fff" d="M19 9h-4V3H9v6H5l7 7 7-7zM5 18v2h14v-2H5z"/></svg>
<div class="b" style="left:2631px;top:773px;width:80px;height:64px;background:#4ba0b5;border-radius:8px;"></div>
<svg class="b" style="left:2654px;top:788.7px;" width="32.6" height="32.6" viewBox="0 0 24 24"><path fill="#fff" d="M21 19V5c0-1.1-.9-2-2-2H5c-1.1 0-2 .9-2 2v14c0 1.1.9 2 2 2h14c1.1 0 2-.9 2-2zM8.5 13.5l2.5 3.01L14.5 12l4.5 6H5l3.5-4.5z"/></svg>
<div class="b" style="left:2721px;top:773px;width:80px;height:64px;background:#f5c344;border-radius:8px;"></div>
<svg class="b" style="left:2744px;top:788.7px;" width="32.6" height="32.6" viewBox="0 0 24 24"><path fill="#000" d="M18.41 5.8L17.2 4.59c-.78-.78-2.05-.78-2.83 0l-2.68 2.68L3 15.96V20h4.04l8.74-8.74 2.63-2.63c.79-.78.79-2.05 0-2.83zM6.21 18H5v-1.21l8.66-8.66 1.21 1.21L6.21 18zM11 20l4-4h6v4H11z"/></svg>
<div class="b" style="left:2811px;top:773px;width:80px;height:64px;background:#6e757c;border-radius:8px;"></div>
<svg class="b" style="left:2834px;top:788.7px;" width="32.6" height="32.6" viewBox="0 0 24 24"><path fill="#fff" d="M18 16.08c-.76 0-1.44.3-1.96.77L8.91 12.7c.05-.23.09-.46.09-.7s-.04-.47-.09-.7l7.05-4.11c.54.5 1.25.81 2.04.81 1.66 0 3-1.34 3-3s-1.34-3-3-3-3 1.34-3 3c0 .24.04.47.09.7L8.04 9.81C7.5 9.31 6.79 9 6 9c-1.66 0-3 1.34-3 3s1.34 3 3 3c.79 0 1.5-.31 2.04-.81l7.12 4.16c-.05.21-.08.43-.08.65 0 1.61 1.31 2.92 2.92 2.92 1.61 0 2.92-1.31 2.92-2.92s-1.31-2.92-2.92-2.92z"/></svg>
<div class="b" style="left:822px;top:891px;width:24px;height:24px;background:#ffffff;border-radius:4px;box-shadow:inset 0 1px 1.5px rgba(0,0,0,0.18);"></div>
<div class="t" id="r3_name" style="left:901.51px;top:884.28px;font-size:33px;line-height:33px;color:#e0e0e0;font-weight:normal;transform:scaleX(0.9967);-webkit-text-stroke:0.6px #e0e0e0;">dark-login.png</div>
<div class="t" id="r3_dm" style="left:1431.97px;top:882.78px;font-size:33px;line-height:33px;color:#e0e0e0;font-weight:normal;transform:scaleX(1.0324);-webkit-text-stroke:0.6px #e0e0e0;">05/05/25 08:30AM</div>
<div class="t" id="r3_ud" style="left:1782.97px;top:882.78px;font-size:33px;line-height:33px;color:#e0e0e0;font-weight:normal;transform:scaleX(1.0301);-webkit-text-stroke:0.6px #e0e0e0;">05/05/25 08:30AM</div>
<div class="t" id="r3_sz" style="left:2133.20px;top:882.78px;font-size:33px;line-height:33px;color:#e0e0e0;font-weight:normal;transform:scaleX(0.9842);-webkit-text-stroke:0.6px #e0e0e0;">146.0 KB</div>
<div class="t" id="r3_ad" style="left:2332.98px;top:882.78px;font-size:33px;line-height:33px;color:#e0e0e0;font-weight:normal;transform:scaleX(1.0230);-webkit-text-stroke:0.6px #e0e0e0;">admin</div>
<div class="b" style="left:2541px;top:869px;width:80px;height:64px;background:#53a551;border-radius:8px;"></div>
<svg class="b" style="left:2564px;top:884.7px;" width="32.6" height="32.6" viewBox="0 0 24 24"><path fill="#fff" d="M19 9h-4V3H9v6H5l7 7 7-7zM5 18v2h14v-2H5z"/></svg>
<div class="b" style="left:2631px;top:869px;width:80px;height:64px;background:#4ba0b5;border-radius:8px;"></div>
<svg class="b" style="left:2654px;top:884.7px;" width="32.6" height="32.6" viewBox="0 0 24 24"><path fill="#fff" d="M21 19V5c0-1.1-.9-2-2-2H5c-1.1 0-2 .9-2 2v14c0 1.1.9 2 2 2h14c1.1 0 2-.9 2-2zM8.5 13.5l2.5 3.01L14.5 12l4.5 6H5l3.5-4.5z"/></svg>
<div class="b" style="left:2721px;top:869px;width:80px;height:64px;background:#f5c344;border-radius:8px;"></div>
<svg class="b" style="left:2744px;top:884.7px;" width="32.6" height="32.6" viewBox="0 0 24 24"><path fill="#000" d="M18.41 5.8L17.2 4.59c-.78-.78-2.05-.78-2.83 0l-2.68 2.68L3 15.96V20h4.04l8.74-8.74 2.63-2.63c.79-.78.79-2.05 0-2.83zM6.21 18H5v-1.21l8.66-8.66 1.21 1.21L6.21 18zM11 20l4-4h6v4H11z"/></svg>
<div class="b" style="left:2811px;top:869px;width:80px;height:64px;background:#6e757c;border-radius:8px;"></div>
<svg class="b" style="left:2834px;top:884.7px;" width="32.6" height="32.6" viewBox="0 0 24 24"><path fill="#fff" d="M18 16.08c-.76 0-1.44.3-1.96.77L8.91 12.7c.05-.23.09-.46.09-.7s-.04-.47-.09-.7l7.05-4.11c.54.5 1.25.81 2.04.81 1.66 0 3-1.34 3-3s-1.34-3-3-3-3 1.34-3 3c0 .24.04.47.09.7L8.04 9.81C7.5 9.31 6.79 9 6 9c-1.66 0-3 1.34-3 3s1.34 3 3 3c.79 0 1.5-.31 2.04-.81l7.12 4.16c-.05.21-.08.43-.08.65 0 1.61 1.31 2.92 2.92 2.92 1.61 0 2.92-1.31 2.92-2.92s-1.31-2.92-2.92-2.92z"/></svg>
<div class="b" style="left:822px;top:987px;width:24px;height:24px;background:#ffffff;border-radius:4px;box-shadow:inset 0 1px 1.5px rgba(0,0,0,0.18);"></div>
<div class="t" id="r4_name" style="left:901.51px;top:980.28px;font-size:33px;line-height:33px;color:#e0e0e0;font-weight:normal;transform:scaleX(0.9844);-webkit-text-stroke:0.6px #e0e0e0;">dark-preview.png</div>
<div class="t" id="r4_dm" style="left:1431.97px;top:978.78px;font-size:33px;line-height:33px;color:#e0e0e0;font-weight:normal;transform:scaleX(1.0324);-webkit-text-stroke:0.6px #e0e0e0;">05/05/25 08:30AM</div>
<div class="t" id="r4_ud" style="left:1782.97px;top:978.78px;font-size:33px;line-height:33px;color:#e0e0e0;font-weight:normal;transform:scaleX(1.0301);-webkit-text-stroke:0.6px #e0e0e0;">05/05/25 08:30AM</div>
<div class="t" id="r4_sz" style="left:2134.19px;top:978.78px;font-size:33px;line-height:33px;color:#e0e0e0;font-weight:normal;transform:scaleX(0.9867);-webkit-text-stroke:0.6px #e0e0e0;">3.2 MB</div>
<div class="t" id="r4_ad" style="left:2332.98px;top:978.78px;font-size:33px;line-height:33px;color:#e0e0e0;font-weight:normal;transform:scaleX(1.0230);-webkit-text-stroke:0.6px #e0e0e0;">admin</div>
<div class="b" style="left:2541px;top:965px;width:80px;height:64px;background:#53a551;border-radius:8px;"></div>
<svg class="b" style="left:2564px;top:980.7px;" width="32.6" height="32.6" viewBox="0 0 24 24"><path fill="#fff" d="M19 9h-4V3H9v6H5l7 7 7-7zM5 18v2h14v-2H5z"/></svg>
<div class="b" style="left:2631px;top:965px;width:80px;height:64px;background:#4ba0b5;border-radius:8px;"></div>
<svg class="b" style="left:2654px;top:980.7px;" width="32.6" height="32.6" viewBox="0 0 24 24"><path fill="#fff" d="M21 19V5c0-1.1-.9-2-2-2H5c-1.1 0-2 .9-2 2v14c0 1.1.9 2 2 2h14c1.1 0 2-.9 2-2zM8.5 13.5l2.5 3.01L14.5 12l4.5 6H5l3.5-4.5z"/></svg>
<div class="b" style="left:2721px;top:965px;width:80px;height:64px;background:#f5c344;border-radius:8px;"></div>
<svg class="b" style="left:2744px;top:980.7px;" width="32.6" height="32.6" viewBox="0 0 24 24"><path fill="#000" d="M18.41 5.8L17.2 4.59c-.78-.78-2.05-.78-2.83 0l-2.68 2.68L3 15.96V20h4.04l8.74-8.74 2.63-2.63c.79-.78.79-2.05 0-2.83zM6.21 18H5v-1.21l8.66-8.66 1.21 1.21L6.21 18zM11 20l4-4h6v4H11z"/></svg>
<div class="b" style="left:2811px;top:965px;width:80px;height:64px;background:#6e757c;border-radius:8px;"></div>
<svg class="b" style="left:2834px;top:980.7px;" width="32.6" height="32.6" viewBox="0 0 24 24"><path fill="#fff" d="M18 16.08c-.76 0-1.44.3-1.96.77L8.91 12.7c.05-.23.09-.46.09-.7s-.04-.47-.09-.7l7.05-4.11c.54.5 1.25.81 2.04.81 1.66 0 3-1.34 3-3s-1.34-3-3-3-3 1.34-3 3c0 .24.04.47.09.7L8.04 9.81C7.5 9.31 6.79 9 6 9c-1.66 0-3 1.34-3 3s1.34 3 3 3c.79 0 1.5-.31 2.04-.81l7.12 4.16c-.05.21-.08.43-.08.65 0 1.61 1.31 2.92 2.92 2.92 1.61 0 2.92-1.31 2.92-2.92s-1.31-2.92-2.92-2.92z"/></svg>
<div class="b" style="left:822px;top:1083px;width:24px;height:24px;background:#ffffff;border-radius:4px;box-shadow:inset 0 1px 1.5px rgba(0,0,0,0.18);"></div>
<div class="t" id="r5_name" style="left:901.50px;top:1076.28px;font-size:33px;line-height:33px;color:#e0e0e0;font-weight:normal;transform:scaleX(1.0021);-webkit-text-stroke:0.6px #e0e0e0;">delete-folder.png</div>
<div class="t" id="r5_dm" style="left:1431.97px;top:1074.78px;font-size:33px;line-height:33px;color:#e0e0e0;font-weight:normal;transform:scaleX(1.0324);-webkit-text-stroke:0.6px #e0e0e0;">05/05/25 08:30AM</div>
<div class="t" id="r5_ud" style="left:1782.97px;top:1074.78px;font-size:33px;line-height:33px;color:#e0e0e0;font-weight:normal;transform:scaleX(1.0301);-webkit-text-stroke:0.6px #e0e0e0;">05/05/25 08:30AM</div>
<div class="t" id="r5_sz" style="left:2134.21px;top:1074.78px;font-size:33px;line-height:33px;color:#e0e0e0;font-weight:normal;transform:scaleX(0.9696);-webkit-text-stroke:0.6px #e0e0e0;">351.0 KB</div>
<div class="t" id="r5_ad" style="left:2332.98px;top:1074.78px;font-size:33px;line-height:33px;color:#e0e0e0;font-weight:normal;transform:scaleX(1.0230);-webkit-text-stroke:0.6px #e0e0e0;">admin</div>
<div class="b" style="left:2541px;top:1061px;width:80px;height:64px;background:#53a551;border-radius:8px;"></div>
<svg class="b" style="left:2564px;top:1076.7px;" width="32.6" height="32.6" viewBox="0 0 24 24"><path fill="#fff" d="M19 9h-4V3H9v6H5l7 7 7-7zM5 18v2h14v-2H5z"/></svg>
<div class="b" style="left:2631px;top:1061px;width:80px;height:64px;background:#4ba0b5;border-radius:8px;"></div>
<svg class="b" style="left:2654px;top:1076.7px;" width="32.6" height="32.6" viewBox="0 0 24 24"><path fill="#fff" d="M21 19V5c0-1.1-.9-2-2-2H5c-1.1 0-2 .9-2 2v14c0 1.1.9 2 2 2h14c1.1 0 2-.9 2-2zM8.5 13.5l2.5 3.01L14.5 12l4.5 6H5l3.5-4.5z"/></svg>
<div class="b" style="left:2721px;top:1061px;width:80px;height:64px;background:#f5c344;border-radius:8px;"></div>
<svg class="b" style="left:2744px;top:1076.7px;" width="32.6" height="32.6" viewBox="0 0 24 24"><path fill="#000" d="M18.41 5.8L17.2 4.59c-.78-.78-2.05-.78-2.83 0l-2.68 2.68L3 15.96V20h4.04l8.74-8.74 2.63-2.63c.79-.78.79-2.05 0-2.83zM6.21 18H5v-1.21l8.66-8.66 1.21 1.21L6.21 18zM11 20l4-4h6v4H11z"/></svg>
<div class="b" style="left:2811px;top:1061px;width:80px;height:64px;background:#6e757c;border-radius:8px;"></div>
<svg class="b" style="left:2834px;top:1076.7px;" width="32.6" height="32.6" viewBox="0 0 24 24"><path fill="#fff" d="M18 16.08c-.76 0-1.44.3-1.96.77L8.91 12.7c.05-.23.09-.46.09-.7s-.04-.47-.09-.7l7.05-4.11c.54.5 1.25.81 2.04.81 1.66 0 3-1.34 3-3s-1.34-3-3-3-3 1.34-3 3c0 .24.04.47.09.7L8.04 9.81C7.5 9.31 6.79 9 6 9c-1.66 0-3 1.34-3 3s1.34 3 3 3c.79 0 1.5-.31 2.04-.81l7.12 4.16c-.05.21-.08.43-.08.65 0 1.61 1.31 2.92 2.92 2.92 1.61 0 2.92-1.31 2.92-2.92s-1.31-2.92-2.92-2.92z"/></svg>
<div class="b" style="left:822px;top:1179px;width:24px;height:24px;background:#ffffff;border-radius:4px;box-shadow:inset 0 1px 1.5px rgba(0,0,0,0.18);"></div>
<div class="t" id="r6_name" style="left:900.50px;top:1172.28px;font-size:33px;line-height:33px;color:#e0e0e0;font-weight:normal;transform:scaleX(1.0021);-webkit-text-stroke:0.6px #e0e0e0;">light-preview.png</div>
<div class="t" id="r6_dm" style="left:1431.97px;top:1170.78px;font-size:33px;line-height:33px;color:#e0e0e0;font-weight:normal;transform:scaleX(1.0324);-webkit-text-stroke:0.6px #e0e0e0;">05/05/25 08:30AM</div>
<div class="t" id="r6_ud" style="left:1782.97px;top:1170.78px;font-size:33px;line-height:33px;color:#e0e0e0;font-weight:normal;transform:scaleX(1.0301);-webkit-text-stroke:0.6px #e0e0e0;">05/05/25 08:30AM</div>
<div class="t" id="r6_sz" style="left:2134.19px;top:1170.78px;font-size:33px;line-height:33px;color:#e0e0e0;font-weight:normal;transform:scaleX(0.9867);-webkit-text-stroke:0.6px #e0e0e0;">3.2 MB</div>
<div class="t" id="r6_ad" style="left:2332.98px;top:1170.78px;font-size:33px;line-height:33px;color:#e0e0e0;font-weight:normal;transform:scaleX(1.0230);-webkit-text-stroke:0.6px #e0e0e0;">admin</div>
<div class="b" style="left:2541px;top:1157px;width:80px;height:64px;background:#53a551;border-radius:8px;"></div>
<svg class="b" style="left:2564px;top:1172.7px;" width="32.6" height="32.6" viewBox="0 0 24 24"><path fill="#fff" d="M19 9h-4V3H9v6H5l7 7 7-7zM5 18v2h14v-2H5z"/></svg>
<div class="b" style="left:2631px;top:1157px;width:80px;height:64px;background:#4ba0b5;border-radius:8px;"></div>
<svg class="b" style="left:2654px;top:1172.7px;" width="32.6" height="32.6" viewBox="0 0 24 24"><path fill="#fff" d="M21 19V5c0-1.1-.9-2-2-2H5c-1.1 0-2 .9-2 2v14c0 1.1.9 2 2 2h14c1.1 0 2-.9 2-2zM8.5 13.5l2.5 3.01L14.5 12l4.5 6H5l3.5-4.5z"/></svg>
<div class="b" style="left:2721px;top:1157px;width:80px;height:64px;background:#f5c344;border-radius:8px;"></div>
<svg class="b" style="left:2744px;top:1172.7px;" width="32.6" height="32.6" viewBox="0 0 24 24"><path fill="#000" d="M18.41 5.8L17.2 4.59c-.78-.78-2.05-.78-2.83 0l-2.68 2.68L3 15.96V20h4.04l8.74-8.74 2.63-2.63c.79-.78.79-2.05 0-2.83zM6.21 18H5v-1.21l8.66-8.66 1.21 1.21L6.21 18zM11 20l4-4h6v4H11z"/></svg>
<div class="b" style="left:2811px;top:1157px;width:80px;height:64px;background:#6e757c;border-radius:8px;"></div>
<svg class="b" style="left:2834px;top:1172.7px;" width="32.6" height="32.6" viewBox="0 0 24 24"><path fill="#fff" d="M18 16.08c-.76 0-1.44.3-1.96.77L8.91 12.7c.05-.23.09-.46.09-.7s-.04-.47-.09-.7l7.05-4.11c.54.5 1.25.81 2.04.81 1.66 0 3-1.34 3-3s-1.34-3-3-3-3 1.34-3 3c0 .24.04.47.09.7L8.04 9.81C7.5 9.31 6.79 9 6 9c-1.66 0-3 1.34-3 3s1.34 3 3 3c.79 0 1.5-.31 2.04-.81l7.12 4.16c-.05.21-.08.43-.08.65 0 1.61 1.31 2.92 2.92 2.92 1.61 0 2.92-1.31 2.92-2.92s-1.31-2.92-2.92-2.92z"/></svg>
<div class="b" style="left:822px;top:1275px;width:24px;height:24px;background:#ffffff;border-radius:4px;box-shadow:inset 0 1px 1.5px rgba(0,0,0,0.18);"></div>
<div class="t" id="r7_name" style="left:900.53px;top:1268.28px;font-size:33px;line-height:33px;color:#e0e0e0;font-weight:normal;transform:scaleX(1.0019);-webkit-text-stroke:0.6px #e0e0e0;">light-share.png</div>
<div class="t" id="r7_dm" style="left:1431.97px;top:1266.78px;font-size:33px;line-height:33px;color:#e0e0e0;font-weight:normal;transform:scaleX(1.0324);-webkit-text-stroke:0.6px #e0e0e0;">05/05/25 08:30AM</div>
<div class="t" id="r7_ud" style="left:1782.97px;top:1266.78px;font-size:33px;line-height:33px;color:#e0e0e0;font-weight:normal;transform:scaleX(1.0301);-webkit-text-stroke:0.6px #e0e0e0;">05/05/25 08:30AM</div>
<div class="t" id="r7_sz" style="left:2135.19px;top:1266.78px;font-size:33px;line-height:33px;color:#e0e0e0;font-weight:normal;transform:scaleX(0.9843);-webkit-text-stroke:0.6px #e0e0e0;">411.9 KB</div>
<div class="t" id="r7_ad" style="left:2332.98px;top:1266.78px;font-size:33px;line-height:33px;color:#e0e0e0;font-weight:normal;transform:scaleX(1.0230);-webkit-text-stroke:0.6px #e0e0e0;">admin</div>
<div class="b" style="left:2541px;top:1253px;width:80px;height:64px;background:#53a551;border-radius:8px;"></div>
<svg class="b" style="left:2564px;top:1268.7px;" width="32.6" height="32.6" viewBox="0 0 24 24"><path fill="#fff" d="M19 9h-4V3H9v6H5l7 7 7-7zM5 18v2h14v-2H5z"/></svg>
<div class="b" style="left:2631px;top:1253px;width:80px;height:64px;background:#4ba0b5;border-radius:8px;"></div>
<svg class="b" style="left:2654px;top:1268.7px;" width="32.6" height="32.6" viewBox="0 0 24 24"><path fill="#fff" d="M21 19V5c0-1.1-.9-2-2-2H5c-1.1 0-2 .9-2 2v14c0 1.1.9 2 2 2h14c1.1 0 2-.9 2-2zM8.5 13.5l2.5 3.01L14.5 12l4.5 6H5l3.5-4.5z"/></svg>
<div class="b" style="left:2721px;top:1253px;width:80px;height:64px;background:#f5c344;border-radius:8px;"></div>
<svg class="b" style="left:2744px;top:1268.7px;" width="32.6" height="32.6" viewBox="0 0 24 24"><path fill="#000" d="M18.41 5.8L17.2 4.59c-.78-.78-2.05-.78-2.83 0l-2.68 2.68L3 15.96V20h4.04l8.74-8.74 2.63-2.63c.79-.78.79-2.05 0-2.83zM6.21 18H5v-1.21l8.66-8.66 1.21 1.21L6.21 18zM11 20l4-4h6v4H11z"/></svg>
<div class="b" style="left:2811px;top:1253px;width:80px;height:64px;background:#6e757c;border-radius:8px;"></div>
<svg class="b" style="left:2834px;top:1268.7px;" width="32.6" height="32.6" viewBox="0 0 24 24"><path fill="#fff" d="M18 16.08c-.76 0-1.44.3-1.96.77L8.91 12.7c.05-.23.09-.46.09-.7s-.04-.47-.09-.7l7.05-4.11c.54.5 1.25.81 2.04.81 1.66 0 3-1.34 3-3s-1.34-3-3-3-3 1.34-3 3c0 .24.04.47.09.7L8.04 9.81C7.5 9.31 6.79 9 6 9c-1.66 0-3 1.34-3 3s1.34 3 3 3c.79 0 1.5-.31 2.04-.81l7.12 4.16c-.05.21-.08.43-.08.65 0 1.61 1.31 2.92 2.92 2.92 1.61 0 2.92-1.31 2.92-2.92s-1.31-2.92-2.92-2.92z"/></svg>
<div class="b" style="left:822px;top:1371px;width:24px;height:24px;background:#ffffff;border-radius:4px;box-shadow:inset 0 1px 1.5px rgba(0,0,0,0.18);"></div>
<div class="t" id="r8_name" style="left:900.51px;top:1364.28px;font-size:33px;line-height:33px;color:#e0e0e0;font-weight:normal;transform:scaleX(1.0116);-webkit-text-stroke:0.6px #e0e0e0;">light-trash.png</div>
<div class="t" id="r8_dm" style="left:1431.97px;top:1362.78px;font-size:33px;line-height:33px;color:#e0e0e0;font-weight:normal;transform:scaleX(1.0324);-webkit-text-stroke:0.6px #e0e0e0;">05/05/25 08:30AM</div>
<div class="t" id="r8_ud" style="left:1782.97px;top:1362.78px;font-size:33px;line-height:33px;color:#e0e0e0;font-weight:normal;transform:scaleX(1.0301);-webkit-text-stroke:0.6px #e0e0e0;">05/05/25 08:30AM</div>
<div class="t" id="r8_sz" style="left:2134.21px;top:1362.78px;font-size:33px;line-height:33px;color:#e0e0e0;font-weight:normal;transform:scaleX(0.9769);-webkit-text-stroke:0.6px #e0e0e0;">501.5 KB</div>
<div class="t" id="r8_ad" style="left:2332.98px;top:1362.78px;font-size:33px;line-height:33px;color:#e0e0e0;font-weight:normal;transform:scaleX(1.0230);-webkit-text-stroke:0.6px #e0e0e0;">admin</div>
<div class="b" style="left:2541px;top:1349px;width:80px;height:64px;background:#53a551;border-radius:8px;"></div>
<svg class="b" style="left:2564px;top:1364.7px;" width="32.6" height="32.6" viewBox="0 0 24 24"><path fill="#fff" d="M19 9h-4V3H9v6H5l7 7 7-7zM5 18v2h14v-2H5z"/></svg>
<div class="b" style="left:2631px;top:1349px;width:80px;height:64px;background:#4ba0b5;border-radius:8px;"></div>
<svg class="b" style="left:2654px;top:1364.7px;" width="32.6" height="32.6" viewBox="0 0 24 24"><path fill="#fff" d="M21 19V5c0-1.1-.9-2-2-2H5c-1.1 0-2 .9-2 2v14c0 1.1.9 2 2 2h14c1.1 0 2-.9 2-2zM8.5 13.5l2.5 3.01L14.5 12l4.5 6H5l3.5-4.5z"/></svg>
<div class="b" style="left:2721px;top:1349px;width:80px;height:64px;background:#f5c344;border-radius:8px;"></div>
<svg class="b" style="left:2744px;top:1364.7px;" width="32.6" height="32.6" viewBox="0 0 24 24"><path fill="#000" d="M18.41 5.8L17.2 4.59c-.78-.78-2.05-.78-2.83 0l-2.68 2.68L3 15.96V20h4.04l8.74-8.74 2.63-2.63c.79-.78.79-2.05 0-2.83zM6.21 18H5v-1.21l8.66-8.66 1.21 1.21L6.21 18zM11 20l4-4h6v4H11z"/></svg>
<div class="b" style="left:2811px;top:1349px;width:80px;height:64px;background:#6e757c;border-radius:8px;"></div>
<svg class="b" style="left:2834px;top:1364.7px;" width="32.6" height="32.6" viewBox="0 0 24 24"><path fill="#fff" d="M18 16.08c-.76 0-1.44.3-1.96.77L8.91 12.7c.05-.23.09-.46.09-.7s-.04-.47-.09-.7l7.05-4.11c.54.5 1.25.81 2.04.81 1.66 0 3-1.34 3-3s-1.34-3-3-3-3 1.34-3 3c0 .24.04.47.09.7L8.04 9.81C7.5 9.31 6.79 9 6 9c-1.66 0-3 1.34-3 3s1.34 3 3 3c.79 0 1.5-.31 2.04-.81l7.12 4.16c-.05.21-.08.43-.08.65 0 1.61 1.31 2.92 2.92 2.92 1.61 0 2.92-1.31 2.92-2.92s-1.31-2.92-2.92-2.92z"/></svg>
<div class="t" id="f_show" style="left:801.78px;top:1473.12px;font-size:32px;line-height:32px;color:#e0e0e0;font-weight:normal;transform:scaleX(1.0022);-webkit-text-stroke:0.6px #e0e0e0;">Show</div>
<svg class="b" style="left:899px;top:1461px" width="122" height="56" viewBox="0 0 122 56">
<defs>
<linearGradient id="sg1" x1="0" y1="0" x2="0" y2="1"><stop offset="0" stop-color="#7c7c7c"/><stop offset="1" stop-color="#555"/></linearGradient>
<linearGradient id="sg2" x1="0" y1="0" x2="0" y2="1"><stop offset="0" stop-color="#333"/><stop offset="1" stop-color="#6a6a6a"/></linearGradient>
<clipPath id="sc"><rect x="1" y="1" width="120" height="54" rx="10"/></clipPath>
</defs>
<rect x="1" y="1" width="120" height="54" rx="10" fill="#2e2e2e" stroke="#4c4c4c" stroke-width="2"/>
<g clip-path="url(#sc)">
<rect x="12" y="20" width="98" height="34" rx="10" fill="url(#sg2)"/>
<rect x="2" y="2" width="118" height="26" fill="url(#sg1)"/>
<rect x="2" y="27" width="118" height="1.5" fill="#2a2a2a"/>
</g>
<polygon points="93.5,25 108,25 100.75,13.7" fill="#f0f0f0"/>
<polygon points="93.5,31 108,31 100.75,42.3" fill="#f0f0f0"/>
</svg>
<div class="t" id="f_10" style="left:916.34px;top:1470.64px;font-size:34px;line-height:34px;color:#f0f0f0;font-weight:normal;transform:scaleX(0.9334);-webkit-text-stroke:0.6px #f0f0f0;">10</div>
<div class="t" id="f_ipp" style="left:1035.54px;top:1473.12px;font-size:32px;line-height:32px;color:#e0e0e0;font-weight:normal;transform:scaleX(1.0316);-webkit-text-stroke:0.6px #e0e0e0;">items per page</div>
<div class="b" style="left:0px;top:0px;width:1px;height:1781px;background:#383838;z-index:3;"></div>
<div class="b" style="left:0px;top:1780px;width:3023px;height:1px;background:#3a3a3a;z-index:3;"></div>
<svg class="b" style="left:0;top:1759px;z-index:4" width="22" height="22" viewBox="0 0 22 22"><path d="M0 0 L0 22 L22 22 L21 22 A21 21 0 0 1 0 1 Z" fill="#101810"/><path d="M0.5 0.5 A21 21 0 0 0 21.5 21.5" stroke="#4a4a4a" stroke-width="1" fill="none"/></svg>
<svg class="b" style="left:3001px;top:1759px;z-index:4" width="22" height="22" viewBox="0 0 22 22"><path d="M22 0 L22 22 L0 22 L1 22 A21 21 0 0 0 22 1 Z" fill="#101810"/><path d="M21.5 0.5 A21 21 0 0 1 0.5 21.5" stroke="#4a4a4a" stroke-width="1" fill="none"/></svg>
</body></html>
